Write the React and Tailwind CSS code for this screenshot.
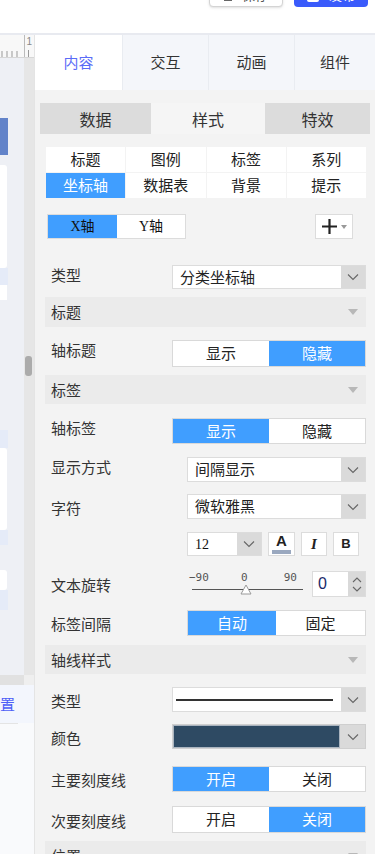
import React from "react";

const Chevron = () => (
  <svg width="12" height="8" viewBox="0 0 12 8">
    <path d="M1 1.5 L6 6.5 L11 1.5" fill="none" stroke="#666" strokeWidth="1.1" />
  </svg>
);

const Tri = () => (
  <svg width="10" height="6" viewBox="0 0 10 6">
    <path d="M0 0H10L5 6Z" fill="#b8b8b8" />
  </svg>
);

function Section({ title, cls }) {
  return (
    <div className={`flex items-center justify-between bg-[#ebebeb] pl-[6px] pr-[8px] text-[15px] text-[#333] ${cls}`}>
      <span className="leading-[20px]">{title}</span>
      <Tri />
    </div>
  );
}

function Row({ label, labelW, raised, cls, children }) {
  return (
    <div className={`flex ${raised ? "items-start" : "items-center"} ${cls}`}>
      <div className={`shrink-0 pl-[6px] text-[15px] leading-[20px] text-[#333] ${labelW} ${raised ? "" : "mt-[2px]"}`}>
        {label}
      </div>
      <div className="flex flex-1 items-stretch self-stretch">{children}</div>
    </div>
  );
}

function Toggle({ a, b, active, split }) {
  return (
    <div className="flex flex-1 border border-[#d9d9d9] bg-white text-[15px]">
      <div
        className={`flex items-center justify-center ${split} ${
          active === 0 ? "bg-[#409eff] text-white" : "text-[#222]"
        }`}
      >
        {a}
      </div>
      <div
        className={`flex flex-1 items-center justify-center ${
          active === 1 ? "bg-[#409eff] text-white" : "text-[#222]"
        }`}
      >
        {b}
      </div>
    </div>
  );
}

function Select({ children }) {
  return (
    <div className="flex flex-1 border border-[#dcdcdc] bg-white">
      <div className="flex flex-1 items-center pl-[7px] text-[15px] text-[#222]">{children}</div>
      <div className="flex w-[24px] items-center justify-center bg-[#dadada]">
        <Chevron />
      </div>
    </div>
  );
}

function LeftStrip() {
  return (
    <div className="flex w-[35px] shrink-0 flex-col border-r border-[#e4e4e4]">
      <div className="h-[23px] border-b border-[#d6d6d6] bg-[#f8f8f8]">
        <svg width="34" height="22" viewBox="0 0 34 22">
          <path d="M2 16V22M7 16V22M12 16V22M17 16V22" stroke="#999" strokeWidth="1" />
          <path d="M24.5 0V22" stroke="#bbb" strokeWidth="1" />
          <text x="26.5" y="10" fontSize="10" fill="#888" fontFamily="Liberation Sans, sans-serif">1</text>
          <path d="M28.5 15V22" stroke="#999" strokeWidth="1" />
        </svg>
      </div>
      <div className="flex h-[627px]">
        <div className="flex w-[24px] flex-col">
          <div className="flex flex-1 flex-col bg-[#eef0f5]">
            <div className="h-[60px]" />
            <div className="h-[37px] w-[8px] bg-[#6283c9]" />
            <div className="h-[10px]" />
            <div className="h-[103px] w-[7px] rounded-r-[3px] bg-white" />
            <div className="h-[17px] w-[8px] bg-[#e5ebf8]" />
            <div className="h-[15px] w-[7px] bg-white" />
            <div className="h-[130px]" />
            <div className="h-[18px] w-[8px] bg-[#e5ebf8]" />
            <div className="h-[82px] w-[7px] rounded-r-[3px] bg-white" />
            <div className="h-[15px] w-[8px] bg-[#e5ebf8]" />
            <div className="h-[25px]" />
            <div className="h-[20px] w-[7px] rounded-r-[3px] bg-white" />
            <div className="h-[20px] w-[8px] bg-[#e5ebf8]" />
          </div>
          <div className="h-[10px] bg-[#e1e1e1]" />
        </div>
        <div className="flex w-[10px] flex-col bg-[#e6e6e6]">
          <div className="h-[298px]" />
          <div className="ml-[1px] h-[20px] w-[7px] rounded-[3px] bg-[#ababab]" />
          <div className="flex-1" />
          <div className="h-[10px] bg-[#efefef]" />
        </div>
      </div>
      <div className="flex flex-1 flex-col bg-[#f9fafc]">
        <div className="flex h-[38px] flex-col bg-[#f3f6fd]">
          <div className="mt-[9px] text-[15px] leading-[20px] text-[#4d5ef7]">置</div>
        </div>
        <div className="h-px w-[18px] bg-[#e4e4e4]" />
        <div className="flex-1" />
        <div className="mb-[8px] h-px bg-[#e4e4e4]" />
      </div>
    </div>
  );
}

export default function App() {
  return (
    <div className="flex h-[854px] w-[375px] flex-col overflow-hidden bg-white font-['Noto_Sans_CJK_SC','Noto_Sans',sans-serif]">
      <div className="flex h-[35px] shrink-0 items-start justify-end gap-[11px] border-b-2 border-[#e8eaf0] bg-white pr-[7px]">
        <div className="-mt-[21px] flex h-[28px] w-[74px] items-center justify-center gap-[10px] rounded-[4px] border border-[#d4d4d4] bg-white text-[13px] text-[#555] shadow-sm">
          <span className="mt-[6px] h-[10px] w-[8px] bg-[#666]" />
          <span className="mt-[4px]">保存</span>
        </div>
        <div className="-mt-[21px] flex h-[28px] w-[74px] items-center justify-center gap-[10px] rounded-[4px] bg-[#3a5bfb] text-[13px] text-white">
          <span className="mt-[4px] h-[14px] w-[12px] rounded-[2px] border-2 border-white" />
          <span className="mt-[4px]">发布</span>
        </div>
      </div>
      <div className="flex flex-1">
        <LeftStrip />
        <div className="flex flex-1 flex-col bg-[#f3f3f3]">
          <div className="grid h-[55px] shrink-0 grid-cols-[87px_85px_85px_1fr] gap-px bg-[#e9ecf1] text-[15px]">
            <div className="flex items-center justify-center bg-white text-[#5a6cf8]">内容</div>
            <div className="flex items-center justify-center bg-[#f4f6fa] text-[#333]">交互</div>
            <div className="flex items-center justify-center bg-[#f4f6fa] text-[#333]">动画</div>
            <div className="flex items-center justify-center bg-[#f4f6fa] text-[#333]">组件</div>
          </div>
          <div className="flex flex-col px-[5px]">
            <div className="mt-[13px] grid h-[31px] grid-cols-[111px_114px_1fr] text-[16px] text-[#333]">
              <div className="flex items-center justify-center bg-[#dcdcdc]">数据</div>
              <div className="flex items-center justify-center bg-[#f5f5f5]">样式</div>
              <div className="flex items-center justify-center bg-[#dcdcdc]">特效</div>
            </div>
            <div className="flex flex-col pl-[5px] pr-[4px]">
              <div className="ml-[1px] mt-[13px] grid grid-cols-4 grid-rows-[25px_25px] gap-px text-[15px] text-[#222]">
                <div className="flex items-center justify-center bg-white">标题</div>
                <div className="flex items-center justify-center bg-white">图例</div>
                <div className="flex items-center justify-center bg-white">标签</div>
                <div className="flex items-center justify-center bg-white">系列</div>
                <div className="flex items-center justify-center bg-[#409eff] text-white">坐标轴</div>
                <div className="flex items-center justify-center bg-white">数据表</div>
                <div className="flex items-center justify-center bg-white">背景</div>
                <div className="flex items-center justify-center bg-white">提示</div>
              </div>
              <div className="mt-[16px] flex h-[25px] items-center justify-between">
                <div className="ml-[2px] flex h-[25px] w-[139px] border border-[#dcdcdc] bg-white font-['Liberation_Serif','Noto_Sans_CJK_SC',serif] text-[14px] text-[#111]">
                  <div className="flex w-[69px] items-center justify-center bg-[#409eff]">X轴</div>
                  <div className="flex flex-1 items-center justify-center">Y轴</div>
                </div>
                <div className="mr-[13px] flex h-[25px] w-[38px] items-center justify-center gap-[3px] border border-[#dcdcdc] bg-white">
                  <svg width="17" height="17" viewBox="0 0 17 17">
                    <path d="M8.5 1V16M1 8.5H16" stroke="#222" strokeWidth="2.2" />
                  </svg>
                  <svg width="6" height="4" viewBox="0 0 6 4">
                    <path d="M0 0H6L3 4Z" fill="#999" />
                  </svg>
                </div>
              </div>

              <Row label="类型" labelW="w-[127px]" raised cls="mt-[26px] h-[24px]">
                <Select>分类坐标轴</Select>
              </Row>

              <Section title="标题" cls="mt-[8px] h-[30px]" />

              <Row label="轴标题" labelW="w-[127px]" raised cls="mt-[13px] h-[27px]">
                <Toggle a="显示" b="隐藏" active={1} split="w-[96px]" />
              </Row>

              <Section title="标签" cls="mt-[8px] h-[29px]" />

              <Row label="轴标签" labelW="w-[127px]" raised cls="mt-[14px] h-[26px]">
                <Toggle a="显示" b="隐藏" active={0} split="w-[96px]" />
              </Row>

              <Row label="显示方式" labelW="w-[142px]" raised cls="mt-[13px] h-[25px]">
                <Select>间隔显示</Select>
              </Row>

              <Row label="字符" labelW="w-[142px]" cls="mt-[12px] h-[25px]">
                <Select>微软雅黑</Select>
              </Row>

              <Row label="" labelW="w-[142px]" cls="mt-[13px] h-[24px]">
                <div className="flex w-[75px] border border-[#dcdcdc] bg-white">
                  <div className="flex flex-1 items-center pl-[7px] font-['Liberation_Serif',serif] text-[14px] text-[#111]">12</div>
                  <div className="flex w-[24px] items-center justify-center bg-[#dadada]">
                    <Chevron />
                  </div>
                </div>
                <div className="ml-[6px] flex w-[27px] flex-col items-center border border-[#dcdcdc] bg-white">
                  <span className="font-['Liberation_Sans',sans-serif] text-[15px] font-bold leading-[16px] text-[#222]">A</span>
                  <span className="mt-[1px] h-[4px] w-[19px] bg-[#9aa8bf]" />
                </div>
                <div className="ml-[6px] flex w-[26px] items-center justify-center border border-[#dcdcdc] bg-white font-['Liberation_Serif',serif] text-[15px] font-bold italic text-[#222]">
                  I
                </div>
                <div className="ml-[6px] flex w-[26px] items-center justify-center border border-[#dcdcdc] bg-white font-['Liberation_Sans',sans-serif] text-[13px] font-bold text-[#222]">
                  B
                </div>
              </Row>

              <Row label="文本旋转" labelW="w-[142px]" cls="mt-[15px] h-[26px]">
                <div className="relative flex w-[117px] flex-col">
                  <div className="flex h-[13px] items-center justify-between pl-[2px] pr-[7px] font-['DejaVu_Sans_Mono',monospace] text-[11px] leading-[13px] text-[#555]">
                    <span>−90</span>
                    <span className="-ml-[4px]">0</span>
                    <span>90</span>
                  </div>
                  <div className="ml-[5px] mt-[5px] h-px w-[111px] bg-[#555]" />
                  <svg className="absolute left-[53px] top-[13px]" width="12" height="11" viewBox="0 0 12 11">
                    <path d="M6 1L11 10H1Z" fill="#fff" stroke="#999" strokeWidth="1" />
                  </svg>
                </div>
                <div className="ml-[8px] flex w-[54px] border border-[#dcdcdc] bg-white">
                  <div className="flex flex-1 items-center pl-[5px] font-['Liberation_Sans',sans-serif] text-[16px] text-[#1a2a6a]">0</div>
                  <div className="flex w-[17px] flex-col items-center justify-center gap-[3px] bg-[#d9d9d9]">
                    <svg width="10" height="6" viewBox="0 0 10 6">
                      <path d="M1 5L5 1L9 5" fill="none" stroke="#666" strokeWidth="1.1" />
                    </svg>
                    <svg width="10" height="6" viewBox="0 0 10 6">
                      <path d="M1 1L5 5L9 1" fill="none" stroke="#666" strokeWidth="1.1" />
                    </svg>
                  </div>
                </div>
              </Row>

              <Row label="标签间隔" labelW="w-[142px]" cls="mt-[13px] h-[26px]">
                <Toggle a="自动" b="固定" active={0} split="w-[88px]" />
              </Row>

              <Section title="轴线样式" cls="mt-[9px] h-[29px]" />

              <Row label="类型" labelW="w-[127px]" cls="mt-[13px] h-[25px]">
                <div className="flex flex-1 border border-[#dcdcdc] bg-white">
                  <div className="flex flex-1 items-center pl-[3px] pr-[8px]">
                    <div className="h-[2px] flex-1 bg-[#333]" />
                  </div>
                  <div className="flex w-[24px] items-center justify-center bg-[#dadada]">
                    <Chevron />
                  </div>
                </div>
              </Row>

              <Row label="颜色" labelW="w-[127px]" cls="mt-[12px] h-[25px]">
                <div className="flex flex-1 border border-[#cfcfcf] bg-white">
                  <div className="flex-1 border border-[#aab4bf] bg-[#2e4a63]" />
                  <div className="flex w-[25px] items-center justify-center bg-[#dadada]">
                    <Chevron />
                  </div>
                </div>
              </Row>

              <Row label="主要刻度线" labelW="w-[127px]" cls="mt-[17px] h-[26px]">
                <Toggle a="开启" b="关闭" active={0} split="w-[96px]" />
              </Row>

              <Row label="次要刻度线" labelW="w-[127px]" cls="mt-[14px] h-[27px]">
                <Toggle a="开启" b="关闭" active={1} split="w-[96px]" />
              </Row>

              <Section title="位置" cls="mt-[8px] h-[30px] shrink-0" />
            </div>
          </div>
        </div>
      </div>
    </div>
  );
}
